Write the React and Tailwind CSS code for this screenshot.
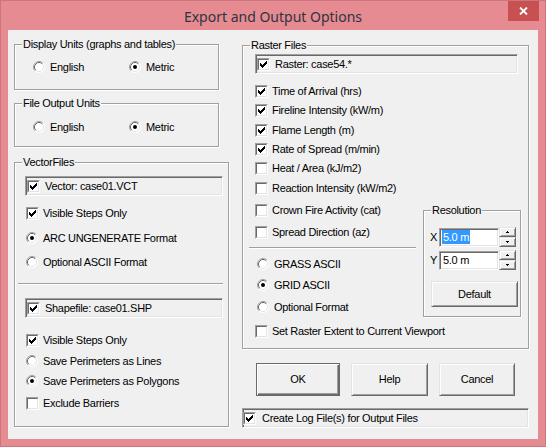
import React from "react";

const FONT = "font-['Liberation_Sans',Arial,sans-serif] text-[11px] leading-[13px] tracking-[-0.3px] text-black";

function CheckMark() {
  return (
    <svg width="7" height="7" viewBox="0 0 7 7" shapeRendering="crispEdges">
      <path
        fill="#000"
        d="M6 0h1v1h-1z M5 1h2v1h-2z M0 2h1v1h-1z M4 2h3v1h-3z M0 3h2v1h-2z M3 3h3v1h-3z M0 4h5v1h-5z M1 5h3v1h-3z M2 6h1v1h-1z"
      />
    </svg>
  );
}

function Check({ checked }) {
  return (
    <span className="flex w-[13px] h-[13px] shrink-0 border border-[#a0a0a0] border-r-white border-b-white">
      <span className="flex flex-1 items-center justify-center bg-white border border-[#696969] border-r-[#e3e3e3] border-b-[#e3e3e3]">
        {checked && <CheckMark />}
      </span>
    </span>
  );
}

function Radio({ checked }) {
  return (
    <svg width="12" height="12" viewBox="0 0 12 12" className="shrink-0">
      <circle cx="6" cy="6" r="5.5" fill="#fff" />
      <path d="M2.11 9.89A5.5 5.5 0 0 1 9.89 2.11" fill="none" stroke="#a0a0a0" />
      <path d="M9.89 2.11A5.5 5.5 0 0 1 2.11 9.89" fill="none" stroke="#ffffff" />
      <path d="M2.82 9.18A4.5 4.5 0 0 1 9.18 2.82" fill="none" stroke="#696969" />
      <path d="M9.18 2.82A4.5 4.5 0 0 1 2.82 9.18" fill="none" stroke="#e3e3e3" />
      {checked && <circle cx="6" cy="6" r="2" fill="#000" />}
    </svg>
  );
}

function CheckRow({ checked, label, className = "" }) {
  return (
    <div className={`flex items-center h-[16px] ${className}`}>
      <Check checked={checked} />
      <span className="ml-[4px] whitespace-nowrap">{label}</span>
    </div>
  );
}

function RadioRow({ checked, label, className = "" }) {
  return (
    <div className={`flex items-center h-[16px] ${className}`}>
      <Radio checked={checked} />
      <span className="ml-[5px] whitespace-nowrap">{label}</span>
    </div>
  );
}

function Group({ label, className = "", children }) {
  return (
    <div className={`relative flex flex-col shrink-0 border border-[#a0a0a0] shadow-[inset_1px_1px_0_#fff,1px_1px_0_#fff] ${className}`}>
      <span className="absolute left-[7px] -top-[7px] bg-[#f0f0f0] px-[1px] whitespace-nowrap">{label}</span>
      {children}
    </div>
  );
}

function Sunken({ className = "", children }) {
  return (
    <div className={`flex items-center h-[20px] shrink-0 border border-[#a0a0a0] border-r-white border-b-white shadow-[inset_1px_1px_0_#696969,inset_-1px_-1px_0_#e3e3e3] ${className}`}>
      {children}
    </div>
  );
}

function Separator({ className = "" }) {
  return <div className={`h-[2px] border-t border-t-[#a0a0a0] border-b border-b-white ${className}`} />;
}

function Button({ label, className = "", isDefault = false }) {
  const look = isDefault
    ? "border border-[#696969] shadow-[inset_1px_1px_0_#fff,inset_-1px_-1px_0_#696969,inset_-2px_-2px_0_#a0a0a0]"
    : "border border-t-[#e3e3e3] border-l-[#e3e3e3] border-r-[#696969] border-b-[#696969] shadow-[inset_1px_1px_0_#fff,inset_-1px_-1px_0_#a0a0a0]";
  return (
    <div className={`flex items-center justify-center shrink-0 bg-[#f0f0f0] ${look} ${className}`}>
      {label}
    </div>
  );
}

function SpinBtn({ up }) {
  return (
    <div className="flex flex-1 items-center justify-center bg-[#f0f0f0] border border-t-[#e3e3e3] border-l-[#e3e3e3] border-r-[#696969] border-b-[#696969] shadow-[inset_1px_1px_0_#fff,inset_-1px_-1px_0_#a0a0a0]">
      <svg width="3" height="2" viewBox="0 0 3 2" shapeRendering="crispEdges">
        {up ? <path d="M1 0h1v1h-1z M0 1h3v1h-3z" fill="#000" /> : <path d="M0 0h3v1h-3z M1 1h1v1h-1z" fill="#000" />}
      </svg>
    </div>
  );
}

function Spinner() {
  return (
    <div className="flex flex-col w-[17px] h-[20px] shrink-0">
      <SpinBtn up />
      <SpinBtn />
    </div>
  );
}

function Field({ selected, value }) {
  return (
    <div className="flex items-center w-[60px] h-[19px] shrink-0 bg-white border border-[#a0a0a0] border-r-white border-b-white shadow-[inset_1px_1px_0_#696969,inset_-1px_-1px_0_#e3e3e3] pl-[2px]">
      {selected ? (
        <span className="bg-[#3399ff] text-white leading-[14px] px-[1px]">{value}</span>
      ) : (
        <span className="px-[1px]">{value}</span>
      )}
    </div>
  );
}

export default function App() {
  return (
    <div className={`w-[546px] h-[447px] overflow-hidden flex flex-col bg-[#e58b91] border border-[#c9777d] ${FONT}`}>
      {/* Title bar */}
      <div className="grid grid-cols-[37px_1fr_37px] h-[29px] shrink-0">
        <div />
        <div className="flex items-center justify-center pt-[1px] font-['Noto_Sans',sans-serif] text-[14px] tracking-normal text-[#2f3440]">
          Export and Output Options
        </div>
        <div className="flex items-start">
          <div className="flex items-center justify-center w-[31px] h-[21px] -mt-[1px] bg-[#c75050]">
            <svg width="9" height="8" viewBox="0 0 9 8">
              <path d="M1 0.5L8 7.5M8 0.5L1 7.5" stroke="#fff" strokeWidth="1.8" />
            </svg>
          </div>
        </div>
      </div>

      {/* Client area */}
      <div className="flex ml-[7px] w-[530px] h-[409px] shrink-0 bg-[#f0f0f0] pl-[6px]">
        {/* Left column */}
        <div className="flex flex-col w-[215px] shrink-0">
          <Group label="Display Units (graphs and tables)" className="mt-[14px] w-[205px] h-[46px]">
            <div className="flex items-center h-[16px] mt-[14px] ml-[18px]">
              <div className="flex items-center w-[96px]">
                <Radio />
                <span className="ml-[5px]">English</span>
              </div>
              <div className="flex items-center">
                <Radio checked />
                <span className="ml-[5px]">Metric</span>
              </div>
            </div>
          </Group>

          <Group label="File Output Units" className="mt-[13px] w-[205px] h-[44px]">
            <div className="flex items-center h-[16px] mt-[15px] ml-[18px]">
              <div className="flex items-center w-[96px]">
                <Radio />
                <span className="ml-[5px]">English</span>
              </div>
              <div className="flex items-center">
                <Radio checked />
                <span className="ml-[5px]">Metric</span>
              </div>
            </div>
          </Group>

          <Group label="VectorFiles" className="mt-[15px] w-[215px] h-[265px]">
            <Sunken className="mt-[13px] ml-[10px] w-[198px]">
              <span className="ml-[1px] flex">
                <Check checked />
              </span>
              <span className="ml-[5px] whitespace-nowrap">Vector: case01.VCT</span>
            </Sunken>
            <CheckRow checked label="Visible Steps Only" className="mt-[9px] ml-[11px]" />
            <RadioRow checked label="ARC UNGENERATE Format" className="mt-[9px] ml-[11px]" />
            <RadioRow label="Optional ASCII Format" className="mt-[8px] ml-[11px]" />
            <Separator className="mt-[13px] ml-[3px] w-[205px]" />
            <Sunken className="mt-[13px] ml-[10px] w-[198px]">
              <span className="ml-[1px] flex">
                <Check checked />
              </span>
              <span className="ml-[5px] whitespace-nowrap">Shapefile: case01.SHP</span>
            </Sunken>
            <CheckRow checked label="Visible Steps Only" className="mt-[14px] ml-[11px]" />
            <RadioRow label="Save Perimeters as Lines" className="mt-[5px] ml-[11px]" />
            <RadioRow checked label="Save Perimeters as Polygons" className="mt-[4px] ml-[11px]" />
            <CheckRow label="Exclude Barriers" className="mt-[6px] ml-[11px]" />
          </Group>
        </div>

        {/* Right column */}
        <div className="flex flex-col ml-[13px] w-[287px] shrink-0">
          <Group label="Raster Files" className="mt-[15px] w-[287px] h-[304px]">
            <Sunken className="mt-[8px] ml-[12px] w-[263px]">
              <span className="ml-[1px] flex">
                <Check checked />
              </span>
              <span className="ml-[5px] whitespace-nowrap">Raster: case54.*</span>
            </Sunken>
            <CheckRow checked label="Time of Arrival (hrs)" className="mt-[9px] ml-[12px]" />
            <CheckRow checked label="Fireline Intensity (kW/m)" className="mt-[3px] ml-[12px]" />
            <CheckRow checked label="Flame Length (m)" className="mt-[4px] ml-[12px]" />
            <CheckRow checked label="Rate of Spread (m/min)" className="mt-[3px] ml-[12px]" />
            <CheckRow label="Heat / Area (kJ/m2)" className="mt-[3px] ml-[12px]" />
            <CheckRow label="Reaction Intensity (kW/m2)" className="mt-[4px] ml-[12px]" />

            <div className="flex items-start">
              <div className="flex flex-col w-[180px] shrink-0">
                <CheckRow label="Crown Fire Activity (cat)" className="mt-[6px] ml-[12px]" />
                <CheckRow label="Spread Direction (az)" className="mt-[6px] ml-[12px]" />
                <Separator className="mt-[7px] ml-[6px] w-[167px]" />
                <RadioRow label="GRASS ASCII" className="mt-[7px] ml-[14px]" />
                <RadioRow checked label="GRID ASCII" className="mt-[5px] ml-[14px]" />
                <RadioRow label="Optional Format" className="mt-[6px] ml-[14px]" />
              </div>

              <Group label="Resolution" className="mt-[14px] w-[98px] h-[107px]">
                <div className="flex items-center h-[20px] mt-[16px] ml-[6px]">
                  <span className="w-[9px]">X</span>
                  <Field selected value="5.0 m" />
                  <Spinner />
                </div>
                <div className="flex items-center h-[20px] mt-[3px] ml-[6px]">
                  <span className="w-[9px]">Y</span>
                  <Field value="5.0 m" />
                  <Spinner />
                </div>
                <Button label="Default" className="mt-[11px] ml-[7px] w-[87px] h-[26px]" />
              </Group>
            </div>

            <CheckRow label="Set Raster Extent to Current Viewport" className="mt-[6px] ml-[12px]" />
          </Group>

          <div className="flex mt-[14px] h-[33px]">
            <Button isDefault label="OK" className="ml-[14px] w-[84px] h-[33px]" />
            <Button label="Help" className="ml-[11px] w-[77px] h-[33px]" />
            <Button label="Cancel" className="ml-[11px] w-[76px] h-[33px]" />
          </div>

          <Sunken className="mt-[12px] w-[287px]">
            <span className="flex">
              <Check checked />
            </span>
            <span className="ml-[6px] whitespace-nowrap">Create Log File(s) for Output Files</span>
          </Sunken>
        </div>
      </div>
    </div>
  );
}
